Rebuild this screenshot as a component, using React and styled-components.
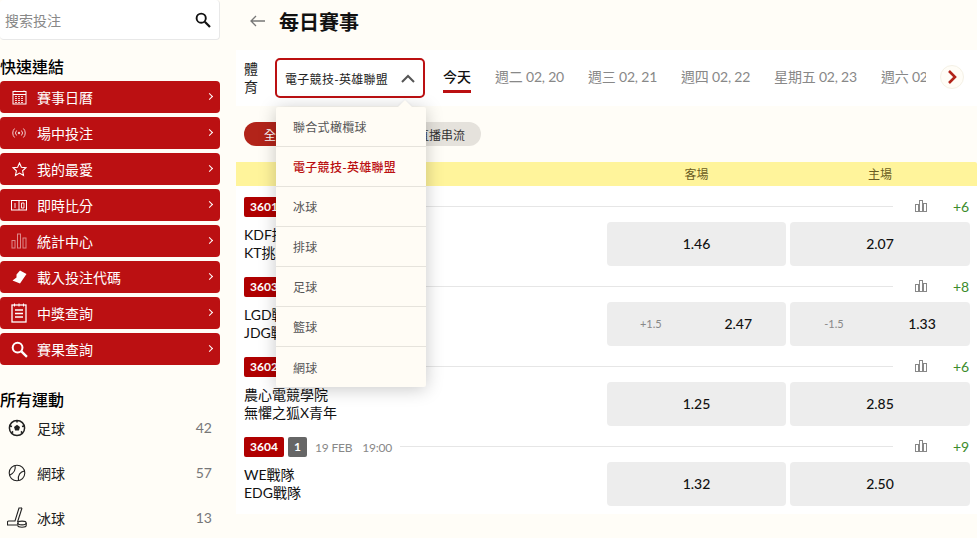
import React from 'react';
import styled, { createGlobalStyle } from 'styled-components';

const GlobalStyle = createGlobalStyle`
  html, body {
    margin: 0;
    height: 100%;
    overflow: hidden;
    background: #fffdf7;
    font-family: Lato, "Noto Sans CJK TC", sans-serif;
    font-size: 14px;
    color: #111;
  }
  * { box-sizing: border-box; }
`;

const Page = styled.div`
  display: flex;
  width: 977px;
  height: 538px;
  overflow: hidden;
`;

const Sidebar = styled.aside`
  width: 220px;
  flex: none;
`;

const SearchBox = styled.div`
  height: 40px;
  display: flex;
  align-items: center;
  justify-content: space-between;
  padding: 0 8px 0 5px;
  background: #fff;
  border: 1px solid #e8e8e8;
  border-left: 0;
  border-top: 0;
  border-radius: 4px;
  color: #888;
`;

const SectionTitle = styled.h3`
  margin: ${props => props.top}px 0 0;
  height: 26px;
  line-height: 24px;
  font-size: 16px;
  font-weight: 500;
  color: #000;
`;

const NavList = styled.nav`
  display: flex;
  flex-direction: column;
  gap: 4px;
`;

const NavItem = styled.a`
  height: 32px;
  display: flex;
  align-items: center;
  padding-left: 10px;
  background: #bb1012;
  border-radius: 4px;
  color: #fff;
`;

const NavIcon = styled.span`
  width: 18px;
  height: 20px;
  margin-right: 9px;
  display: flex;
  align-items: center;
  justify-content: center;
`;

const NavText = styled.span`
  flex: 1;
`;

const NavArrow = styled.span`
  width: 5px;
  height: 5px;
  margin-right: 8px;
  margin-bottom: 1px;
  border-top: 1.5px solid #fff;
  border-right: 1.5px solid #fff;
  transform: rotate(45deg);
`;

const SportRow = styled.div`
  height: 45px;
  display: flex;
  align-items: center;
  padding: 0 8px 0 6px;
  margin-top: ${props => (props.first ? '-9px' : '0')};
`;

const SportIcon = styled.span`
  width: 22px;
  height: 22px;
  margin-right: 9px;
  display: flex;
  align-items: center;
  justify-content: center;
`;

const SportName = styled.span`
  flex: 1;
  color: #222;
`;

const SportCount = styled.span`
  color: #777;
`;

const Main = styled.main`
  flex: 1;
  min-width: 0;
  margin-left: 16px;
`;

const TitleBar = styled.header`
  height: 50px;
  padding: 0 0 8px 14px;
  display: flex;
  align-items: center;
  gap: 14px;
`;

const PageTitle = styled.h1`
  margin: 0;
  font-size: 20px;
  font-weight: 700;
  color: #111;
`;

const FilterBar = styled.div`
  height: 56px;
  display: flex;
  align-items: center;
  padding-left: 8px;
  background: #fff;
`;

const SportLabel = styled.div`
  width: 14px;
  line-height: 18px;
  color: #222;
`;

const SelectWrap = styled.div`
  position: relative;
  margin: 0 18px 0 17px;
`;

const SelectBox = styled.div`
  width: 150px;
  height: 40px;
  padding: 0 8px 0 8px;
  display: flex;
  align-items: center;
  justify-content: space-between;
  border: 2px solid #bb1012;
  border-radius: 5px;
  background: #fff;
  font-size: 12px;
  letter-spacing: 0.3px;
  color: #222;
`;

const Dropdown = styled.ul`
  position: absolute;
  top: 49px;
  left: 1px;
  width: 150px;
  margin: 0;
  padding: 0;
  list-style: none;
  background: #fffcf5;
  border-radius: 2px;
  box-shadow: 0 2px 18px rgba(0, 0, 0, 0.22);
  z-index: 5;

  &::before {
    content: '';
    position: absolute;
    top: -5px;
    right: 16px;
    width: 10px;
    height: 10px;
    background: #fffcf5;
    transform: rotate(45deg);
    box-shadow: -1px -1px 2px rgba(0, 0, 0, 0.04);
  }
`;

const DropdownItem = styled.li`
  position: relative;
  height: 40px;
  padding-left: 17px;
  display: flex;
  align-items: center;
  font-size: 12px;
  letter-spacing: 0.3px;
  color: ${props => (props.active ? '#bb1012' : '#555')};
  font-weight: ${props => (props.active ? 500 : 400)};
  border-bottom: 1px solid #e6e3dc;

  &:last-child {
    border-bottom: 0;
  }
`;

const Tabs = styled.div`
  flex: 1;
  min-width: 0;
  height: 100%;
  display: flex;
  gap: 24px;
  overflow: hidden;
`;

const Tab = styled.div`
  flex: none;
  height: 43px;
  padding-top: 17px;
  line-height: 20px;
  white-space: nowrap;
  letter-spacing: ${props => (props.active ? '0' : '-0.2px')};
  font-weight: ${props => (props.active ? 500 : 400)};
  color: ${props => (props.active ? '#111' : '#888')};
  border-bottom: ${props => (props.active ? '3px solid #bb1012' : '0')};
`;

const NextButton = styled.div`
  flex: none;
  width: 24px;
  height: 24px;
  margin: 0 13px 2px 14px;
  display: flex;
  align-items: center;
  justify-content: center;
  border-radius: 50%;
  background: #fffdf7;
  border: 1px solid #f5f1e6;
`;

const PillRow = styled.div`
  height: 24px;
  margin-top: 16px;
  padding-left: 8px;
  display: flex;
  gap: 8px;
`;

const Pill = styled.div`
  height: 24px;
  width: ${props => props.width}px;
  padding-left: ${props => props.pad}px;
  display: flex;
  align-items: center;
  border-radius: 12px;
  font-size: 12px;
  white-space: nowrap;
  background: ${props => (props.active ? '#b2241a' : '#e5e2dc')};
  color: ${props => (props.active ? '#fff' : '#333')};
`;

const OddsGrid = styled.div`
  width: 363px;
  flex: none;
  display: grid;
  grid-template-columns: 179px 180px;
  gap: 4px;
`;

const Band = styled.div`
  height: 24px;
  margin-top: 16px;
  display: flex;
  justify-content: flex-end;
  padding-right: 7px;
  background: #fff49b;
  border-top-right-radius: 2px;
`;

const BandLabel = styled.div`
  text-align: center;
  line-height: 25px;
  font-size: 12px;
  color: #6a5c22;
`;

const MatchList = styled.div`
  padding-bottom: 8px;
  background: #fff;
`;

const MatchRow = styled.div`
  height: 80px;
  padding: 11px 7px 0 8px;
`;

const MetaRow = styled.div`
  height: 20px;
  display: flex;
  align-items: center;
`;

const CodeBadge = styled.span`
  width: 40px;
  height: 20px;
  border-radius: 2px;
  background: #b00000;
  color: #fff;
  font-size: 12px;
  font-weight: 700;
  line-height: 20px;
  text-align: center;
`;

const RoundBadge = styled.span`
  width: 19px;
  height: 20px;
  margin-left: 4px;
  border-radius: 2px;
  background: #666;
  color: #fff;
  font-size: 12px;
  font-weight: 700;
  line-height: 20px;
  text-align: center;
`;

const MetaText = styled.span`
  margin-left: ${props => props.left}px;
  font-size: 12px;
  letter-spacing: -0.2px;
  color: #888;
`;

const Rule = styled.span`
  flex: 1;
  height: 1px;
  margin: 0 22px 1px 8px;
  background: #e6e6e6;
`;

const StatIcon = styled.svg`
  flex: none;
  margin-bottom: 3px;
`;

const MoreCount = styled.span`
  width: 17px;
  margin-left: 26px;
  margin-bottom: 1px;
  color: #3c8c2c;
  white-space: nowrap;
`;

const MatchBody = styled.div`
  height: 44px;
  margin-top: 5px;
  display: flex;
  justify-content: space-between;
`;

const Teams = styled.div`
  padding-top: 4px;
  line-height: 18px;
  color: #111;
`;

const OddsButton = styled.div`
  height: 44px;
  padding: 0 ${props => (props.split ? '4px' : '0')} 2px 0;
  display: flex;
  align-items: center;
  justify-content: center;
  background: #ededed;
  border-radius: 4px;
`;

const OddsPart = styled.span`
  flex: 1;
  text-align: center;
  font-size: ${props => (props.line ? '11px' : '14px')};
  font-weight: ${props => (props.line ? 400 : 500)};
  color: ${props => (props.line ? '#888' : '#111')};
`;

const SearchIcon = ({ size = 16, color = '#111' }) => (
  <svg width={size} height={size} viewBox="0 0 16 16" fill="none" stroke={color}>
    <circle cx="6.2" cy="6.2" r="4.6" strokeWidth="1.9" />
    <path d="M9.8 9.8L15 15" strokeWidth="2.2" />
  </svg>
);

const CalendarIcon = () => (
  <svg width="15" height="15" viewBox="0 0 15 15" fill="none" stroke="#fff">
    <rect x="1" y="1.5" width="13" height="12.5" strokeWidth="1" />
    <path d="M1 4.5H14" strokeWidth="1" />
    <path d="M3 0.5V2M12 0.5V2" strokeWidth="1" />
    <path d="M3 6.5H12M3 8.5H12M3 10.5H12M3 12.5H12" strokeWidth="1" strokeDasharray="2 1" opacity="0.8" />
  </svg>
);

const LiveIcon = () => (
  <svg width="14" height="12" viewBox="0 0 14 12" fill="none" stroke="#fff" opacity="0.8">
    <circle cx="7" cy="6" r="1.2" fill="#fff" stroke="none" />
    <path d="M4.6 3.5a3.6 3.6 0 0 0 0 5M9.4 3.5a3.6 3.6 0 0 1 0 5" />
    <path d="M2.6 1.5a6.4 6.4 0 0 0 0 9M11.4 1.5a6.4 6.4 0 0 1 0 9" />
  </svg>
);

const StarIcon = () => (
  <svg width="15" height="15" viewBox="0 0 15 15" fill="none" stroke="#fff" strokeWidth="1.1">
    <path d="M7.5 1l1.9 4.2 4.6.5-3.4 3.1.9 4.6-4-2.3-4 2.3.9-4.6L1 5.7l4.6-.5z" />
  </svg>
);

const ScoreIcon = () => (
  <svg width="16" height="12" viewBox="0 0 16 12" fill="none" stroke="#fff">
    <rect x="0.5" y="1.5" width="15" height="9.5" />
    <path d="M8 1.5V11" />
    <path d="M4 4v5M10.5 4h2.5v5h-2.5z" strokeWidth="0.9" />
  </svg>
);

const BarsIcon = ({ color = '#fff', opacity = 1 }) => (
  <svg width="16" height="16" viewBox="0 0 16 16" fill="none" stroke={color} opacity={opacity}>
    <rect x="1" y="7.5" width="3" height="7.5" />
    <rect x="6.5" y="1" width="3" height="14" />
    <rect x="12" y="5" width="3" height="10" />
  </svg>
);

const TicketIcon = () => (
  <svg width="15" height="14" viewBox="0 0 15 14">
    <path d="M8 0.5L14.5 4 8 13.5 0.5 10.5 4.5 7.5 4.5 4.5z" fill="#fff" />
  </svg>
);

const NoteIcon = () => (
  <svg width="16" height="20" viewBox="0 0 16 20" fill="none" stroke="#fff">
    <rect x="1" y="2" width="14" height="17" strokeWidth="1.3" />
    <path d="M3.5 0.5V3.5M8 0.5V3.5M12.5 0.5V3.5" />
    <path d="M4 7H12M4 10.5H12M4 14H12" strokeWidth="1.3" />
  </svg>
);

const SoccerIcon = () => (
  <svg width="18" height="18" viewBox="0 0 18 18">
    <circle cx="9" cy="9" r="7.6" fill="none" stroke="#222" strokeWidth="1.5" />
    <path d="M9 5.8l3 2.2-1.1 3.5H7.1L6 8z" fill="#222" />
    <path d="M9 1.5v2M16 7l-2 .6M3.6 14l1.4-1.6M14.4 14L13 12.4M2 7l2 .6" stroke="#222" strokeWidth="1.6" />
  </svg>
);

const TennisIcon = () => (
  <svg width="18" height="18" viewBox="0 0 18 18" fill="none" stroke="#222" strokeWidth="1.1">
    <circle cx="9" cy="9" r="7.8" />
    <path d="M7 1.5C8 5.5 6 9 1.6 11.2M16.4 7C12.5 7.6 9.5 11 10.5 16.6" />
  </svg>
);

const HockeyIcon = () => (
  <svg width="20" height="21" viewBox="0 0 20 21" fill="none" stroke="#222" strokeWidth="1.1">
    <path d="M15 1h-3L8 14H1.5a1 1 0 0 0-1 1v3H10" />
    <path d="M15 1L10.5 15" />
    <ellipse cx="15" cy="16" rx="4.2" ry="1.9" />
    <path d="M10.8 16v2.6c0 1 2 1.7 4.2 1.7s4.2-.7 4.2-1.7V16" />
  </svg>
);

const navItems = [
  { label: '賽事日曆', icon: <CalendarIcon /> },
  { label: '場中投注', icon: <LiveIcon /> },
  { label: '我的最愛', icon: <StarIcon /> },
  { label: '即時比分', icon: <ScoreIcon /> },
  { label: '統計中心', icon: <BarsIcon opacity={0.5} /> },
  { label: '載入投注代碼', icon: <TicketIcon /> },
  { label: '中獎查詢', icon: <NoteIcon /> },
  { label: '賽果查詢', icon: <SearchIcon size={17} color="#fff" /> },
];

const sports = [
  { label: '足球', count: 42, icon: <SoccerIcon /> },
  { label: '網球', count: 57, icon: <TennisIcon /> },
  { label: '冰球', count: 13, icon: <HockeyIcon /> },
];

const dropdownItems = ['聯合式橄欖球', '電子競技-英雄聯盟', '冰球', '排球', '足球', '籃球', '網球'];

const tabs = ['今天', '週二 02, 20', '週三 02, 21', '週四 02, 22', '星期五 02, 23', '週六 02, 24'];

const matches = [
  { code: '3601', teams: ['KDF挑戰者', 'KT挑戰者'], more: '+6', away: ['1.46'], home: ['2.07'] },
  { code: '3603', teams: ['LGD戰隊', 'JDG戰隊'], more: '+8', away: ['+1.5', '2.47'], home: ['-1.5', '1.33'] },
  { code: '3602', teams: ['農心電競學院', '無懼之狐X青年'], more: '+6', away: ['1.25'], home: ['2.85'] },
  { code: '3604', teams: ['WE戰隊', 'EDG戰隊'], more: '+9', away: ['1.32'], home: ['2.50'] },
];

const Odds = ({ values }) => (
  <OddsButton split={values.length > 1}>
    {values.length > 1 && <OddsPart line>{values[0]}</OddsPart>}
    <OddsPart>{values[values.length - 1]}</OddsPart>
  </OddsButton>
);

export default function App() {
  return (
    <Page>
      <GlobalStyle />
      <Sidebar>
        <SearchBox>
          搜索投注
          <SearchIcon />
        </SearchBox>
        <SectionTitle top={15}>快速連結</SectionTitle>
        <NavList>
          {navItems.map(item => (
            <NavItem key={item.label}>
              <NavIcon>{item.icon}</NavIcon>
              <NavText>{item.label}</NavText>
              <NavArrow />
            </NavItem>
          ))}
        </NavList>
        <SectionTitle top={23}>所有運動</SectionTitle>
        {sports.map((sport, i) => (
          <SportRow key={sport.label} first={i === 0}>
            <SportIcon>{sport.icon}</SportIcon>
            <SportName>{sport.label}</SportName>
            <SportCount>{sport.count}</SportCount>
          </SportRow>
        ))}
      </Sidebar>

      <Main>
        <TitleBar>
          <svg width="15" height="12" viewBox="0 0 15 12" fill="none" stroke="#777" strokeWidth="1.3">
            <path d="M15 6H1M6 1L1 6l5 5" />
          </svg>
          <PageTitle>每日賽事</PageTitle>
        </TitleBar>

        <FilterBar>
          <SportLabel>體育</SportLabel>
          <SelectWrap>
            <SelectBox>
              電子競技-英雄聯盟
              <svg width="14" height="9" viewBox="0 0 14 9" fill="none" stroke="#555" strokeWidth="2">
                <path d="M1 8l6-6 6 6" />
              </svg>
            </SelectBox>
            <Dropdown>
              {dropdownItems.map(item => (
                <DropdownItem key={item} active={item === '電子競技-英雄聯盟'}>{item}</DropdownItem>
              ))}
            </Dropdown>
          </SelectWrap>
          <Tabs>
            {tabs.map((tab, i) => (
              <Tab key={tab} active={i === 0}>{tab}</Tab>
            ))}
          </Tabs>
          <NextButton>
            <svg width="10" height="14" viewBox="0 0 10 14" fill="none" stroke="#b2241a" strokeWidth="2.6">
              <path d="M2 1l6 6-6 6" />
            </svg>
          </NextButton>
        </FilterBar>

        <PillRow>
          <Pill active width={90} pad={20}>全部</Pill>
          <Pill width={139} pad={75}>直播串流</Pill>
        </PillRow>

        <Band>
          <OddsGrid>
            <BandLabel>客場</BandLabel>
            <BandLabel>主場</BandLabel>
          </OddsGrid>
        </Band>

        <MatchList>
          {matches.map(match => (
            <MatchRow key={match.code}>
              <MetaRow>
                <CodeBadge>{match.code}</CodeBadge>
                <RoundBadge>1</RoundBadge>
                <MetaText left={8}>19 FEB</MetaText>
                <MetaText left={10}>19:00</MetaText>
                <Rule />
                <StatIcon width="12" height="12" viewBox="0 0 12 12" fill="none" stroke="#888">
                  <rect x="0.5" y="4.5" width="3" height="7" />
                  <rect x="4.5" y="0.5" width="3" height="11" />
                  <rect x="8.5" y="3.5" width="3" height="8" />
                </StatIcon>
                <MoreCount>{match.more}</MoreCount>
              </MetaRow>
              <MatchBody>
                <Teams>
                  {match.teams[0]}
                  <br />
                  {match.teams[1]}
                </Teams>
                <OddsGrid>
                  <Odds values={match.away} />
                  <Odds values={match.home} />
                </OddsGrid>
              </MatchBody>
            </MatchRow>
          ))}
        </MatchList>
      </Main>
    </Page>
  );
}
